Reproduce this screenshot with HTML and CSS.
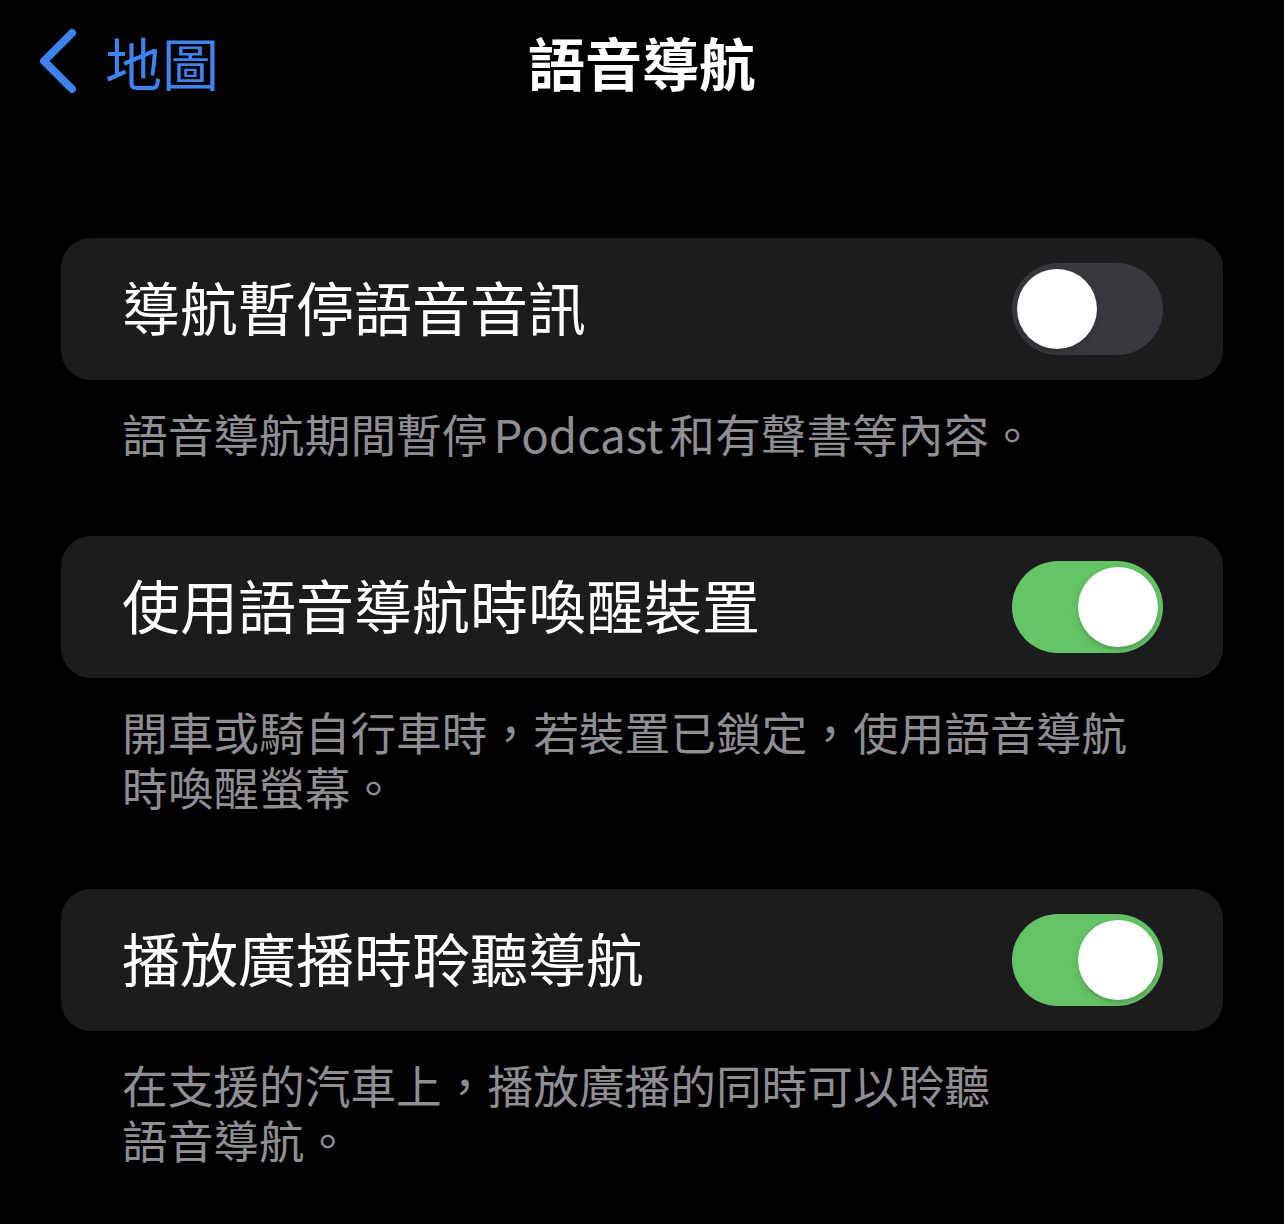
FILE: index.html
```html
<!DOCTYPE html>
<html lang="zh-Hant">
<head>
  <meta charset="UTF-8" />
  <title>語音導航</title>
  <link rel="stylesheet" href="styles.css">
</head>
<body>
  <div class="nav-bar">
    <a class="back" href="#">
      <svg class="chevron" width="40" height="64" viewBox="0 0 40 64">
        <polyline points="34,4 6,32 34,60" fill="none" stroke="currentColor" stroke-width="8" stroke-linecap="round" stroke-linejoin="round" />
      </svg>
      <span>地圖</span>
    </a>
    <h1 class="title">語音導航</h1>
  </div>

  <div class="settings">
    <div class="group">
      <div class="cell">
        <span class="label">導航暫停語音音訊</span>
        <div class="switch"><div class="knob"></div></div>
      </div>
      <p class="footer">語音導航期間暫停<span class="latin">Podcast</span>和有聲書等內容。</p>
    </div>

    <div class="group">
      <div class="cell">
        <span class="label">使用語音導航時喚醒裝置</span>
        <div class="switch on"><div class="knob"></div></div>
      </div>
      <p class="footer">開車或騎自行車時，若裝置已鎖定，使用語音導航<br>時喚醒螢幕。</p>
    </div>

    <div class="group">
      <div class="cell">
        <span class="label">播放廣播時聆聽導航</span>
        <div class="switch on"><div class="knob"></div></div>
      </div>
      <p class="footer">在支援的汽車上，播放廣播的同時可以聆聽<br>語音導航。</p>
    </div>
  </div>
</body>
</html>
```

FILE: styles.css
```css
body {
  margin: 0;
  background: #000;
  color: #fff;
  font-family: "Noto Sans CJK TC", "Noto Sans", sans-serif;
}

.nav-bar {
  position: relative;
  height: 122px;
  display: flex;
  align-items: center;
  justify-content: center;
}

.back {
  position: absolute;
  left: 38px;
  top: 0;
  height: 122px;
  display: flex;
  align-items: center;
  gap: 27px;
  color: #3d84f0;
  text-decoration: none;
  font-size: 57px;
}

.back span {
  line-height: 1;
}

.title {
  margin: 0;
  font-size: 57px;
  font-weight: 700;
  line-height: 1;
}

.settings {
  padding: 116px 61px 0;
}

.group {
  margin-bottom: 75px;
}

.cell {
  height: 142px;
  background: #1c1c1e;
  border-radius: 30px;
  padding: 0 60px 0 61px;
  display: flex;
  align-items: center;
  justify-content: space-between;
}

.label {
  font-size: 58px;
  line-height: 1;
  padding-bottom: 6px;
}

.switch {
  width: 151px;
  height: 92px;
  border-radius: 46px;
  background: #39393d;
  padding: 6px 5px;
  box-sizing: border-box;
  display: flex;
  justify-content: flex-start;
}

.switch.on {
  background: #65c466;
  justify-content: flex-end;
}

.knob {
  width: 80px;
  height: 80px;
  border-radius: 50%;
  background: #fff;
  box-shadow: 0 3px 8px rgba(0, 0, 0, 0.15), 0 3px 1px rgba(0, 0, 0, 0.06);
}

.footer {
  margin: 26px 0 0;
  padding-left: 61px;
  font-size: 45.7px;
  line-height: 55px;
  color: #8e8e93;
}

.latin {
  margin: 0 6px;
}
```
